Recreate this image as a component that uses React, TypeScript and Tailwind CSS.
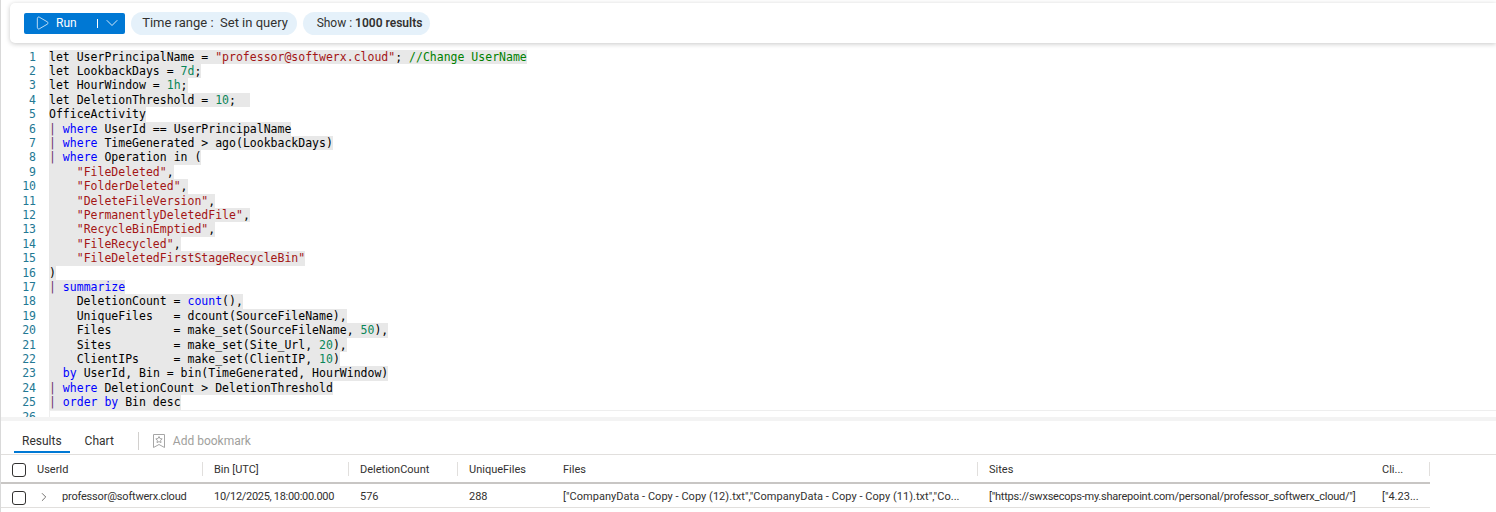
import { ChevronDown, ChevronRight, Play } from "lucide-react";

const K = "text-[#0000ff]";
const S = "text-[#a31515]";
const N = "text-[#098658]";
const C = "text-[#008000]";
const P = "text-[#703070]";

type Token = string | [string, string];

const lines: Token[][] = [
  ["let UserPrincipalName = ", ['"professor@softwerx.cloud"', S], "; ", ["//Change UserName", C]],
  ["let LookbackDays = ", ["7d", N], ";"],
  ["let HourWindow = ", ["1h", N], ";"],
  ["let DeletionThreshold = ", ["10", N], ";  "],
  ["OfficeActivity"],
  [["| ", P], ["where", K], " UserId == UserPrincipalName"],
  [["| ", P], ["where", K], " TimeGenerated > ago(LookbackDays)"],
  [["| ", P], ["where", K], " Operation in ("],
  ["    ", ['"FileDeleted"', S], ","],
  ["    ", ['"FolderDeleted"', S], ","],
  ["    ", ['"DeleteFileVersion"', S], ","],
  ["    ", ['"PermanentlyDeletedFile"', S], ","],
  ["    ", ['"RecycleBinEmptied"', S], ","],
  ["    ", ['"FileRecycled"', S], ","],
  ["    ", ['"FileDeletedFirstStageRecycleBin"', S]],
  [")"],
  [["| ", P], ["summarize", K]],
  ["    DeletionCount = ", ["count", K], "(),"],
  ["    UniqueFiles   = dcount(SourceFileName),"],
  ["    Files         = make_set(SourceFileName, ", ["50", N], "),"],
  ["    Sites         = make_set(Site_Url, ", ["20", N], "),"],
  ["    ClientIPs     = make_set(ClientIP, ", ["10", N], ")"],
  ["  ", ["by", K], " UserId, Bin = bin(TimeGenerated, HourWindow)"],
  [["| ", P], ["where", K], " DeletionCount > DeletionThreshold"],
  [["| ", P], ["order by", K], " Bin desc"],
];

const columns = "grid-cols-[25px_177px_146px_109px_94px_426px_393px_59px]";

const Checkbox = () => (
  <span className="block h-[14px] w-[14px] rounded-[3px] border border-[#323130]" />
);

const HeaderCell = ({ label, divider = true }: { label: string; divider?: boolean }) => (
  <div className="relative flex items-center pl-[11px] text-[#323130]">
    {label}
    {divider && <span className="absolute right-0 top-[4px] h-[14px] w-px bg-[#e1dfdd]" />}
  </div>
);

const BookmarkIcon = () => (
  <svg width="14" height="16" viewBox="0 0 14 16" fill="none" stroke="#a6a6a6" strokeWidth="1">
    <path d="M1.5 1.5h11v13L7 11.5l-5.5 3z" />
    <path d="M7 3.5l1 2.1 2.2.3-1.6 1.5.4 2.2L7 8.6 5 9.600l.4-2.2L3.800 5.900 6 5.600z" />
  </svg>
);

export default function App() {
  return (
    <div className="h-[512px] w-[1496px] overflow-hidden border-l border-l-[#d9d9d9] bg-white font-['Roboto',sans-serif]">
      <div className="pl-[9px] pt-[3px]">
        <div className="flex h-[40px] items-center rounded-l-[5px] bg-white pl-[14px] shadow-[0_1px_5px_rgba(0,0,0,0.22)]">
          <button className="flex h-[21px] w-[101px] items-center rounded-[2px] bg-[#0078d4] pl-[10px] text-[12px] text-white">
            <Play size={16} strokeWidth={1.1} />
            <span className="ml-[6px]">Run</span>
            <span className="ml-[20px] h-[9px] w-px bg-white" />
            <ChevronDown size={20} strokeWidth={1} className="ml-[4px]" />
          </button>
          <div className="ml-[6px] flex h-[23px] w-[166px] items-center justify-center rounded-full bg-[#e5f1fa] pl-[2px] text-[13px] text-[#323130]">
            Time range :&nbsp;&nbsp;Set in query
          </div>
          <div className="ml-[6px] flex h-[23px] w-[127px] items-center justify-center rounded-full bg-[#e5f1fa] pl-[6px] text-[12px] text-[#323130]">
            Show :&nbsp;<span className="font-semibold">1000 results</span>
          </div>
        </div>
      </div>

      <div className="mt-[6px] h-[368px] overflow-hidden pt-[0.5px] font-['DejaVu_Sans_Mono',monospace] text-[11.5px] leading-[14.42px] text-black">
        {lines.map((tokens, i) => (
          <div key={i} className="flex h-[14.42px]">
            <span className="w-[35px] shrink-0 text-right text-[#237893]">{i + 1}</span>
            <span className="ml-[13px] whitespace-pre bg-[#e8e8e8]">
              {tokens.map((t, j) =>
                typeof t === "string" ? (
                  <span key={j}>{t}</span>
                ) : (
                  <span key={j} className={t[1]}>
                    {t[0]}
                  </span>
                ),
              )}
            </span>
          </div>
        ))}
        <div className="flex h-[14.42px]">
          <span className="w-[35px] shrink-0 text-right text-[#237893]">26</span>
          <span className="ml-[13px] grow border-l border-t border-[#eeeeee]" />
        </div>
      </div>

      <div className="h-[4px] bg-[#f3f3f3]" />

      <div className="flex h-[34px] items-center border-b border-[#e1dfdd] pl-[13px] pt-[6px] text-[12px]">
        <div className="relative flex h-full items-center px-[8px] text-[#323130]">
          Results
          <span className="absolute bottom-[1px] left-0 h-[2px] w-full bg-[#0078d4]" />
        </div>
        <span className="ml-[15px] text-[#323130]">Chart</span>
        <span className="ml-[24px] h-[18px] w-px bg-[#d2d0ce]" />
        <span className="ml-[13px]">
          <BookmarkIcon />
        </span>
        <span className="ml-[7px] text-[#a19f9d]">Add bookmark</span>
      </div>

      <div className={`grid h-[29px] w-[1429px] whitespace-nowrap border-b-2 border-[#c8c6c4] pt-[3px] text-[11px] ${columns}`}>
        <div className="flex items-center pl-[11px]">
          <Checkbox />
        </div>
        <HeaderCell label="UserId" />
        <HeaderCell label="Bin [UTC]" />
        <HeaderCell label="DeletionCount" />
        <HeaderCell label="UniqueFiles" divider={false} />
        <HeaderCell label="Files" />
        <HeaderCell label="Sites" divider={false} />
        <HeaderCell label="Cli..." />
      </div>

      <div className={`grid h-[24px] w-[1429px] whitespace-nowrap border-b border-[#e1dfdd] pt-[4px] text-[11px] text-[#323130] ${columns}`}>
        <div className="flex items-center pl-[11px]">
          <Checkbox />
        </div>
        <div className="flex items-center pl-[11px]">
          <ChevronRight size={14} strokeWidth={1.5} className="mb-[2px] text-[#605e5c]" />
          <span className="ml-[11px] tracking-[-0.2px]">professor@softwerx.cloud</span>
        </div>
        <div className="flex items-center pl-[11px] tracking-[-0.3px]">10/12/2025, 18:00:00.000</div>
        <div className="flex items-center pl-[11px]">576</div>
        <div className="flex items-center pl-[11px]">288</div>
        <div className="flex items-center overflow-hidden pl-[11px] tracking-[0.04px]">["CompanyData - Copy - Copy (12).txt","CompanyData - Copy - Copy (11).txt","Co...</div>
        <div className="flex items-center pl-[11px] tracking-[-0.22px]">["https://swxsecops-my.sharepoint.com/personal/professor_softwerx_cloud/"]</div>
        <div className="flex items-center pl-[11px]">["4.23...</div>
      </div>
    </div>
  );
}
